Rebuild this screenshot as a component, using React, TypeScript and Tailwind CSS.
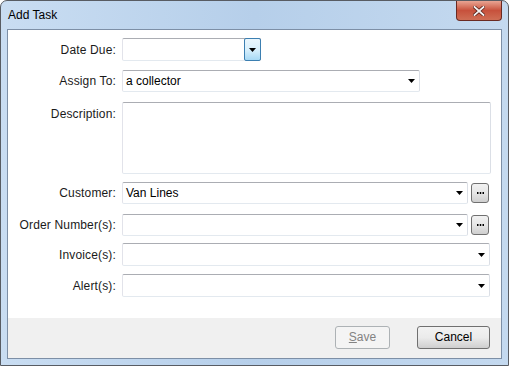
import React from "react";

const font = { fontFamily: '"Liberation Sans", Arial, sans-serif' };

function Arrow({ className = "" }: { className?: string }) {
  return (
    <svg width="7" height="4" viewBox="0 0 7 4" className={className}>
      <path d="M0 0H7L3.5 4Z" fill="#000" />
    </svg>
  );
}

function Combo({ text, w, h = 22 }: { text?: string; w: string; h?: number }) {
  return (
    <div
      className={`relative flex items-center ${w} border border-[#abadb3] border-l-[#e2e3ea] border-r-[#dbdfe6] border-b-[#e3e9ef] rounded-[2px] bg-white pl-[3px] text-[12px] text-black`}
      style={{ height: h }}
    >
      <span>{text}</span>
      <Arrow className="absolute right-[4px] top-1/2 -translate-y-1/2" />
    </div>
  );
}

function Ellipsis() {
  return (
    <div className="ml-[3px] w-[18px] h-[20px] rounded-[3px] border border-[#707070] bg-gradient-to-b from-[#f2f2f2] via-[#e6e6e6] to-[#cfcfcf] flex items-center justify-center">
      <svg width="7" height="2" viewBox="0 0 7 2">
        <rect x="0" y="0" width="1.5" height="2" fill="#000" />
        <rect x="2.75" y="0" width="1.5" height="2" fill="#000" />
        <rect x="5.5" y="0" width="1.5" height="2" fill="#000" />
      </svg>
    </div>
  );
}

function Label({ children }: { children: React.ReactNode }) {
  return <div className="w-[108px] text-right text-[12px] text-[#1a1a1a] shrink-0 tracking-[0.15px]">{children}</div>;
}

export default function App() {
  return (
    <div
      className="relative w-[509px] h-[366px] rounded-t-[7px] border border-[#585c63] bg-gradient-to-r from-[#c9ddf2] via-[#b6cfea] to-[#c4d9ef] overflow-hidden"
      style={font}
    >
      {/* title bar */}
      <div className="h-[28px] flex items-center pl-[7px] text-[12px] text-black">Add Task</div>
      <div className="absolute left-[455px] top-[0px] w-[46px] h-[20px] rounded-b-[4px] border border-[#6a2a22] border-t-0 bg-gradient-to-b from-[#e8a493] via-[#c7513c] to-[#cf6e55] flex items-center justify-center">
        <svg width="12" height="10" viewBox="0 0 12 10">
          <path d="M1.5 1L10.5 9M10.5 1L1.5 9" stroke="#5a2219" strokeWidth="3.4" strokeLinecap="square" />
          <path d="M1.5 1L10.5 9M10.5 1L1.5 9" stroke="#f4f4f4" strokeWidth="1.8" strokeLinecap="square" />
        </svg>
      </div>

      {/* client */}
      <div className="mx-[6px] h-[330px] border border-[#7d8fa6] bg-white flex flex-col">
        <div className="flex-1 flex flex-col pt-[8px]">
          {/* Date Due */}
          <div className="flex items-center gap-[6px] h-[23px]">
            <Label>Date Due:</Label>
            <div className="relative w-[139px] h-[23px] border border-[#abadb3] border-l-[#e2e3ea] border-b-[#e3e9ef] rounded-[2px] bg-white">
              <div className="absolute right-[-1px] top-[-1px] w-[17px] h-[23px] border border-[#3c7fb1] rounded-[2px] bg-gradient-to-b from-[#eaf6fd] via-[#d9f0fc] to-[#a7d9f5] flex items-center justify-center">
                <Arrow />
              </div>
            </div>
          </div>
          {/* Assign To */}
          <div className="flex items-center gap-[6px] mt-[9px]">
            <Label>Assign To:</Label>
            <Combo text="a collector" w="w-[298px]" />
          </div>
          {/* Description */}
          <div className="flex items-start gap-[6px] mt-[10px]">
            <div className="pt-[3px]">
              <Label>Description:</Label>
            </div>
            <div className="w-[369px] h-[72px] border border-[#abadb3] border-l-[#e2e3ea] border-r-[#dbdfe6] border-b-[#e3e9ef] rounded-[2px] bg-white" />
          </div>
          {/* Customer */}
          <div className="flex items-center gap-[6px] mt-[8px]">
            <Label>Customer:</Label>
            <div className="flex items-center">
              <Combo text="Van Lines" w="w-[346px]" />
              <Ellipsis />
            </div>
          </div>
          {/* Order */}
          <div className="flex items-center gap-[6px] mt-[10px]">
            <Label>Order Number(s):</Label>
            <div className="flex items-center">
              <Combo w="w-[346px]" />
              <Ellipsis />
            </div>
          </div>
          {/* Invoice */}
          <div className="flex items-center gap-[6px] mt-[7px]">
            <Label>Invoice(s):</Label>
            <Combo w="w-[368px]" h={23} />
          </div>
          {/* Alert */}
          <div className="flex items-center gap-[6px] mt-[8px]">
            <Label>Alert(s):</Label>
            <Combo w="w-[368px]" h={23} />
          </div>
        </div>
        {/* footer */}
        <div className="h-[40px] bg-[#f0f0f0] flex items-center justify-end gap-[27px] pr-[11px] pb-[2px]">
          <div className="w-[55px] h-[23px] rounded-[3px] border border-[#adb2b5] bg-[#f4f4f4] flex items-center justify-center text-[12px] text-[#838383]">
            <span>
              <span className="underline">S</span>ave
            </span>
          </div>
          <div className="w-[73px] h-[23px] rounded-[3px] border border-[#707070] bg-gradient-to-b from-[#f2f2f2] via-[#ebebeb] to-[#cfcfcf] flex items-center justify-center text-[12px] text-black">
            Cancel
          </div>
        </div>
      </div>
    </div>
  );
}
